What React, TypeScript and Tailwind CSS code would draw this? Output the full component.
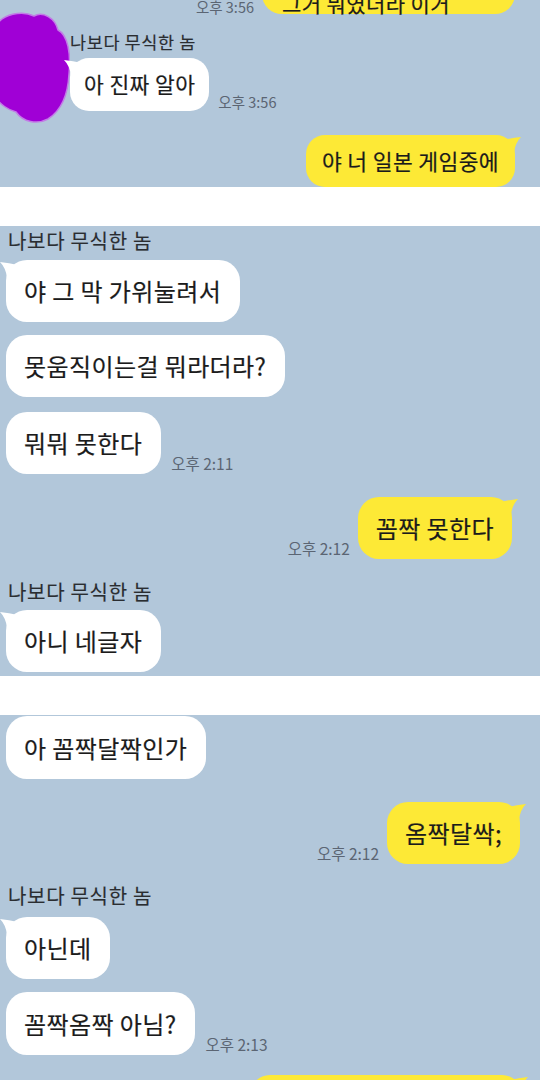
import React from "react";

const FONT = { fontFamily: '"Noto Sans CJK KR", "Noto Sans", sans-serif' };

function TailLeft({ color }: { color: string }) {
  return (
    <svg className="absolute -left-[6px] top-[2px]" width="18" height="16" viewBox="0 0 18 16">
      <path d="M0 0 Q9 1 18 3 L18 16 L7 16 Q6 6 0 0 Z" fill={color} />
    </svg>
  );
}

function TailRight({ color }: { color: string }) {
  return (
    <svg className="absolute -right-[6px] top-[2px]" width="18" height="16" viewBox="0 0 18 16">
      <path d="M18 0 Q9 1 0 3 L0 16 L11 16 Q12 6 18 0 Z" fill={color} />
    </svg>
  );
}

function Time({ t }: { t: string }) {
  return (
    <span className="text-[#5b6573] text-[15.5px] whitespace-nowrap leading-none mb-[3px]">{t}</span>
  );
}

const TXT = "font-normal [-webkit-text-stroke:0.2px_#1b1b1b] tracking-[0.4px]";

function LeftBubble({ text, tail, time, cls }: { text: string; tail?: boolean; time?: string; cls?: string }) {
  return (
    <div className="flex items-end gap-[10px]">
      <div
        className={
          "relative bg-white rounded-[21px] flex items-center pl-[18px] pr-[19px] h-[62px] text-[24px] text-[#1b1b1b] whitespace-nowrap " +
          TXT +
          " " +
          (cls || "")
        }
      >
        {tail && <TailLeft color="#ffffff" />}
        <span className="relative">{text}</span>
      </div>
      {time && <Time t={time} />}
    </div>
  );
}

function RightBubble({ text, time, cls }: { text: string; time?: string; cls?: string }) {
  return (
    <div className="flex items-end justify-end gap-[8px]">
      {time && <Time t={time} />}
      <div
        className={
          "relative bg-[#fde936] rounded-[21px] flex items-center px-[18px] h-[62px] text-[24px] text-[#1b1b1b] whitespace-nowrap " +
          TXT +
          " " +
          (cls || "")
        }
      >
        <TailRight color="#fde936" />
        <span className="relative">{text}</span>
      </div>
    </div>
  );
}

function Name({ cls }: { cls?: string }) {
  return (
    <div
      className={
        "text-[20px] font-normal [-webkit-text-stroke:0.15px_#2a2d31] tracking-[0.7px] leading-[22px] text-[#2a2d31] whitespace-nowrap " +
        (cls || "")
      }
    >
      나보다 무식한 놈
    </div>
  );
}

function Blob() {
  return (
    <svg width="70" height="112" viewBox="0 12 70 112" className="shrink-0">
      <path
        d="M-4 26 C2 14 22 10 34 16 C43 11 55 18 58 30 C68 35 71 54 69 74 C68 94 62 110 48 119 C37 125 23 122 16 112 C8 110 0 104 -4 98 Z"
        fill="#a000d6"
        stroke="#c27ce6"
        strokeWidth="1.5"
      />
    </svg>
  );
}

export default function App() {
  return (
    <div className="w-[540px] h-[1080px] bg-white overflow-hidden" style={FONT}>
      {/* Panel 1 */}
      <div className="h-[187px] bg-[#b2c7da] overflow-hidden flex flex-col">
        <div className="flex items-end justify-end gap-[8px] pr-[25px] mt-[-39px]">
          <span className="text-[#5b6573] text-[14.5px] leading-none mb-0">오후 3:56</span>
          <div
            className={
              "relative bg-[#fde936] rounded-[20px] flex items-center pl-[20px] h-[53px] w-[253px] text-[21px] text-[#1b1b1b] whitespace-nowrap " +
              TXT
            }
          >
            <TailRight color="#fde936" />
            <span className="relative translate-y-[16px]">그거 뭐였더라 이거</span>
          </div>
        </div>
        <div className="flex items-start mt-[-2px]">
          <Blob />
          <div className="flex flex-col pt-[20px]">
            <div className="text-[17.5px] font-normal [-webkit-text-stroke:0.15px_#2a2d31] tracking-[0.6px] leading-[20px] text-[#2a2d31] whitespace-nowrap">
              나보다 무식한 놈
            </div>
            <div className="flex items-end gap-[9px] mt-[6px]">
              <div
                className={
                  "relative bg-white rounded-[19px] flex items-center px-[14px] h-[53px] text-[21.5px] text-[#1b1b1b] whitespace-nowrap " +
                  TXT
                }
              >
                <TailLeft color="#ffffff" />
                <span className="relative">아 진짜 알아</span>
              </div>
              <span className="text-[#5b6573] text-[14.5px] leading-none mb-[2px]">오후 3:56</span>
            </div>
          </div>
        </div>
        <div className="flex justify-end pr-[25px] mt-[11px]">
          <div
            className={
              "relative bg-[#fde936] rounded-[19px] flex items-center px-[16px] h-[52px] text-[21.5px] text-[#1b1b1b] whitespace-nowrap " +
              TXT
            }
          >
            <TailRight color="#fde936" />
            <span className="relative">야 너 일본 게임중에</span>
          </div>
        </div>
      </div>

      <div className="h-[39px]" />

      {/* Panel 2 */}
      <div className="h-[450px] bg-[#b2c7da] overflow-hidden flex flex-col px-[6px] pt-[4px]">
        <Name cls="ml-[2px]" />
        <div className="mt-[8px]">
          <LeftBubble text="야 그 막 가위눌려서" tail />
        </div>
        <div className="mt-[13px]">
          <LeftBubble text="못움직이는걸 뭐라더라?" />
        </div>
        <div className="mt-[15px]">
          <LeftBubble text="뭐뭐 못한다" time="오후 2:11" />
        </div>
        <div className="mt-[23px] pr-[22px]">
          <RightBubble text="꼼짝 못한다" time="오후 2:12" />
        </div>
        <Name cls="ml-[2px] mt-[22px]" />
        <div className="mt-[7px]">
          <LeftBubble text="아니 네글자" tail />
        </div>
      </div>

      <div className="h-[39px]" />

      {/* Panel 3 */}
      <div className="h-[365px] bg-[#b2c7da] overflow-hidden flex flex-col px-[6px] pt-[1px]">
        <div>
          <LeftBubble text="아 꼼짝달짝인가" cls="h-[63px]" />
        </div>
        <div className="mt-[23px] pr-[14px]">
          <RightBubble text="옴짝달싹;" time="오후 2:12" />
        </div>
        <Name cls="ml-[2px] mt-[21px]" />
        <div className="mt-[10px]">
          <LeftBubble text="아닌데" tail />
        </div>
        <div className="mt-[13px]">
          <LeftBubble text="꼼짝옴짝 아님?" time="오후 2:13" cls="h-[63px]" />
        </div>
        <div className="mt-[20px] flex justify-end pr-[12px]">
          <div className="relative bg-[#fde936] rounded-[20px] h-[62px] w-[272px]">
            <TailRight color="#fde936" />
          </div>
        </div>
      </div>
    </div>
  );
}
